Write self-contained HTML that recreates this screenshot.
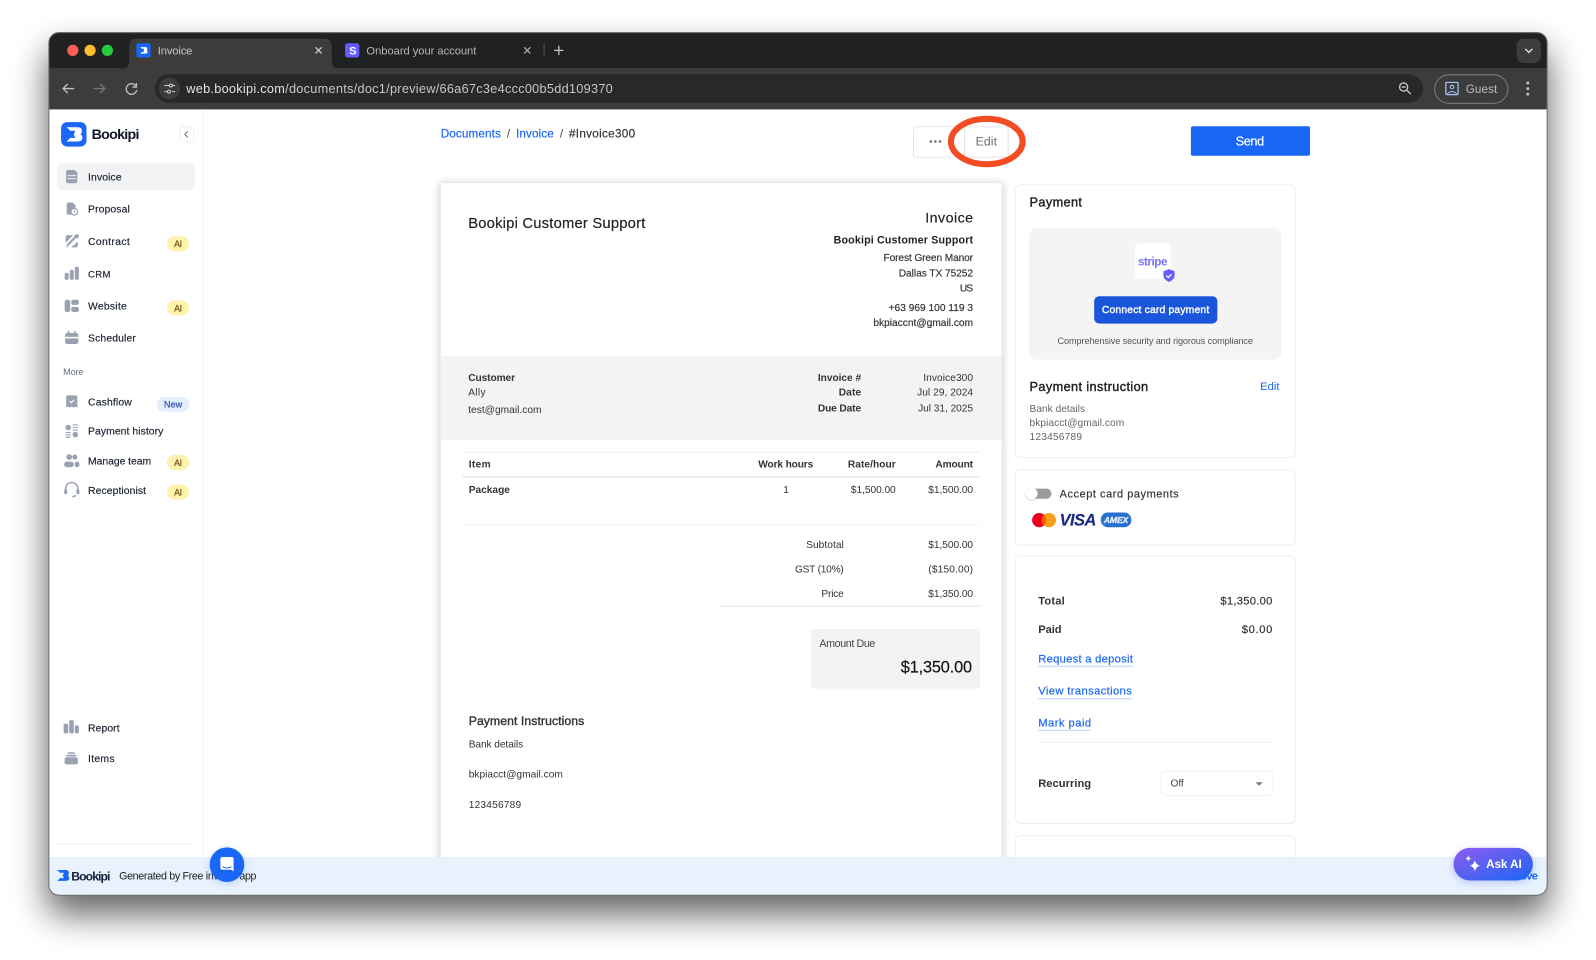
<!DOCTYPE html>
<html lang="en">
<head>
<meta charset="utf-8">
<title>Invoice</title>
<style>
html,body{margin:0;padding:0;background:#fff;width:1596px;height:960px;overflow:hidden}
svg{display:block;width:1596px;height:960px;filter:blur(.3px)}
text{font-family:"Liberation Sans",sans-serif;white-space:pre}
.m{stroke-width:.18;paint-order:stroke}
.h{stroke-width:.38;paint-order:stroke}
.b{font-weight:700}
</style>
</head>
<body>
<svg xmlns="http://www.w3.org/2000/svg" viewBox="0 0 1568 943.16">
<defs>
<filter id="sh" filterUnits="userSpaceOnUse" x="0" y="0" width="1568" height="943"><feGaussianBlur stdDeviation="17"/></filter>
<filter id="sh2" filterUnits="userSpaceOnUse" x="380" y="140" width="660" height="760"><feGaussianBlur stdDeviation="4"/></filter>
<filter id="sh3" filterUnits="userSpaceOnUse" x="190" y="815" width="1350" height="70"><feGaussianBlur stdDeviation="4"/></filter>
<clipPath id="w"><rect x="48" y="32" width="1472" height="847.500" rx="10"/></clipPath>
<clipPath id="main"><rect x="200" y="108" width="1320" height="734"/></clipPath>
<linearGradient id="ai" x1="0" y1="0" x2="1" y2="1"><stop offset="0" stop-color="#8f5cf0"/><stop offset="1" stop-color="#1a66f5"/></linearGradient>
<path id="bk" d="M5 5H16Q20 5 20 9Q20 11 18.500 12Q20.500 13 20.500 15.500Q20.500 19 16 19H5L8.500 15.500H13.500L12 12L13.500 8.500H8.500Z"/>
</defs>

<!-- window shadow -->
<rect x="46" y="49" width="1476" height="850" rx="14" fill="#000" opacity=".6" filter="url(#sh)"/>

<g clip-path="url(#w)">
<!-- chrome -->
<rect x="48" y="32" width="1472" height="36" fill="#202221"/>
<rect x="48" y="67" width="1472" height="41" fill="#3c3c3c"/>
<path d="M119 68Q127 68 127 60V46Q127 38 135 38H318Q326 38 326 46V60Q326 68 334 68Z" fill="#3c3c3c"/>
<circle cx="71.500" cy="49.500" r="5.500" fill="#ff5f57"/>
<circle cx="88.500" cy="49.500" r="5.500" fill="#febc2e"/>
<circle cx="105.500" cy="49.500" r="5.500" fill="#28c840"/>
<rect x="134" y="42.500" width="14" height="14" rx="2" fill="#1a66f5"/>
<use href="#bk" transform="translate(135.500 44) scale(.46)" fill="#fff"/>
<text x="155" y="53.500" font-size="11" fill="#c9c9c9" textLength="34">Invoice</text>
<path d="M310 46.500l6 6M316 46.500l-6 6" stroke="#d0d0d0" stroke-width="1.200"/>
<rect x="339" y="42.500" width="14" height="14" rx="2.500" fill="#635bff"/>
<text x="343" y="53.500" font-size="11" class="b" fill="#fff">S</text>
<text x="360" y="53.500" font-size="11" fill="#b6b6b6" textLength="108">Onboard your account</text>
<path d="M515 46.500l6 6M521 46.500l-6 6" stroke="#b0b0b0" stroke-width="1.200"/>
<rect x="534" y="43" width="1" height="13" fill="#555"/>
<path d="M549 45v9M544.500 49.500h9" stroke="#c8c8c8" stroke-width="1.300"/>
<rect x="1490" y="38" width="24" height="24" rx="7" fill="#3c3c3c"/>
<path d="M1498.500 48l3.500 3.500 3.500-3.500" fill="none" stroke="#ddd" stroke-width="1.400"/>

<path d="M73 87H62M66.500 82.500L62 87l4.500 4.500" fill="none" stroke="#c0c0c0" stroke-width="1.300"/>
<path d="M92 87H103M98.500 82.500L103 87l-4.500 4.500" fill="none" stroke="#777" stroke-width="1.300"/>
<path d="M133.500 84.500A5.200 5.200 0 1 0 134.300 88.500M134 81.500v4h-4" fill="none" stroke="#c0c0c0" stroke-width="1.300"/>
<rect x="152" y="73" width="1246" height="28" rx="14" fill="#282828"/>
<circle cx="166.500" cy="87" r="10.500" fill="#3c3c3c"/>
<path d="M161.500 84h5M169.500 84h2.500M161.500 90h2.500M169 90h3" stroke="#d0d0d0" stroke-width="1"/>
<circle cx="168" cy="84" r="1.500" fill="none" stroke="#d0d0d0"/><circle cx="166" cy="90" r="1.500" fill="none" stroke="#d0d0d0"/>
<text x="183" y="91.500" font-size="12.500" fill="#dedede" textLength="419"><tspan fill="#e4e4e4">web.bookipi.com</tspan><tspan fill="#c8c8c8">/documents/doc1/preview/66a67c3e4ccc00b5dd109370</tspan></text>
<circle cx="1379" cy="85.500" r="4" fill="none" stroke="#c8c8c8" stroke-width="1.300"/>
<path d="M1377 85.500h4M1382 88.500l4 4" stroke="#c8c8c8" stroke-width="1.300"/>
<rect x="1409.500" y="73.500" width="72" height="28" rx="14" fill="none" stroke="#7c7c7c"/>
<rect x="1420.500" y="81" width="12" height="12" rx="1" fill="none" stroke="#a8c7fa" stroke-width="1.200"/>
<circle cx="1426.500" cy="85.500" r="1.800" fill="none" stroke="#a8c7fa"/>
<path d="M1422 92q4.500-4 9 0" fill="none" stroke="#a8c7fa"/>
<text x="1440" y="91.500" font-size="11.500" fill="#bcbcbc" textLength="31">Guest</text>
<circle cx="1501" cy="81.500" r="1.400" fill="#c8c8c8"/><circle cx="1501" cy="87" r="1.400" fill="#c8c8c8"/><circle cx="1501" cy="92.500" r="1.400" fill="#c8c8c8"/>

<!-- page -->
<rect x="48" y="107.500" width="1472" height="773" fill="#fff"/>
<rect x="199" y="108" width="1" height="734" fill="#f1f2f4"/>

<!-- sidebar -->
<rect x="60" y="120" width="25" height="24" rx="6" fill="#1a66f5"/>
<use href="#bk" transform="translate(60.500 120)" fill="#fff"/>
<text x="90" y="136.500" font-size="14" class="b" fill="#101828" textLength="47">Bookipi</text>
<rect x="176.500" y="124.500" width="14" height="15" rx="4" fill="#fff" stroke="#eceef1"/>
<path d="M184.500 129l-3 3 3 3" fill="none" stroke="#667085" stroke-width="1"/>
<rect x="56" y="160" width="135.500" height="27" rx="6" fill="#f2f3f5"/>

<g font-size="10.200" fill="#1d2433" stroke="#1d2433">
<text class="m" x="86.500" y="177.500" textLength="33">Invoice</text>
<text class="m" x="86.500" y="208.700" textLength="41">Proposal</text>
<text class="m" x="86.500" y="240.500" textLength="41">Contract</text>
<text class="m" x="86.500" y="272.500" font-size="9.400" textLength="22">CRM</text>
<text class="m" x="86.500" y="304" textLength="38">Website</text>
<text class="m" x="86.500" y="335.500" textLength="47">Scheduler</text>
<text class="m" x="86.500" y="398.500" textLength="43">Cashflow</text>
<text class="m" x="86.500" y="427" textLength="74">Payment history</text>
<text class="m" x="86.500" y="456.500" textLength="62">Manage team</text>
<text class="m" x="86.500" y="485.500" textLength="57">Receptionist</text>
<text class="m" x="86.500" y="718.500" textLength="31">Report</text>
<text class="m" x="86.500" y="748.500" textLength="26">Items</text>
</g>
<text x="62" y="368.500" font-size="9" fill="#667085" textLength="20">More</text>

<g fill="#fdf3b0">
<rect x="164" y="232" width="22" height="15" rx="7.500"/>
<rect x="164" y="295" width="22" height="15" rx="7.500"/>
<rect x="164" y="447" width="22" height="15" rx="7.500"/>
<rect x="164" y="476" width="22" height="15" rx="7.500"/>
</g>
<g font-size="9" fill="#7a4f10" stroke="#7a4f10">
<text class="m" x="171" y="242.800" textLength="8">AI</text>
<text class="m" x="171" y="305.800" textLength="8">AI</text>
<text class="m" x="171" y="457.800" textLength="8">AI</text>
<text class="m" x="171" y="486.800" textLength="8">AI</text>
</g>
<rect x="154" y="390" width="32" height="14.500" rx="7.200" fill="#e3effc"/>
<text class="m" x="161" y="400.500" font-size="9" fill="#2952b3" stroke="#2952b3" textLength="18">New</text>

<!-- sidebar icons -->
<g fill="#9aa2b1">
<g transform="translate(70.500 173.500)"><path d="M-5.500-4.500q0-2 2-2H3l2.500 2.500V4.500q0 2-2 2h-7q-2 0-2-2Z"/><path d="M-4-1H4M-4 2H4" stroke="#f2f3f5" stroke-width="1"/></g>
<g transform="translate(70.500 205)"><path d="M-5-3.500q0-2.500 2-2.500h4l3 3v2h-1a4.500 4.500 0 0 0-3 7h-3q-2 0-2-2Z"/><circle cx="2.500" cy="3" r="3.300" fill="none" stroke="#9aa2b1" stroke-width="1.200"/><path d="M2.500 1.500V3l1 1" fill="none" stroke="#9aa2b1" stroke-width=".8"/></g>
<g transform="translate(70.500 237)"><path d="M-6-4q0-2 2-2H1.500L-6 1.500ZM6 .5V4q0 2-2 2H-.5ZM-6 5-3 5.800-5.500 6ZM-5 6 3-2l3-3-1.500-1.500L-4 2-6 6Z"/><path d="M3.500-6.500l2-.5 1.500 1.500-.5 2-1 1L2.500-5Z"/></g>
<g transform="translate(70.500 269)"><rect x="-7" y="-1" width="4" height="7" rx="2"/><rect x="-2" y="-4" width="4" height="10" rx="2"/><rect x="3" y="-7" width="4" height="13" rx="2"/></g>
<g transform="translate(70.500 300.500)"><rect x="-7" y="-6" width="5.500" height="12" rx="2.200"/><rect x="-.5" y="-6" width="7.500" height="5" rx="2"/><rect x="-.5" y="1" width="7.500" height="5" rx="2"/></g>
<g transform="translate(70.500 332)"><path d="M-6.500-2.500q0-2.500 2.500-2.500H4q2.500 0 2.500 2.500V-1h-13ZM-6.500.5h13V3.500q0 2.500-2.500 2.500H-4q-2.500 0-2.500-2.500Z"/><rect x="-4" y="-7" width="1.500" height="3" rx=".7"/><rect x="2.500" y="-7" width="1.500" height="3" rx=".7"/></g>
<g transform="translate(70.500 394.500)"><path d="M-5.500-4.500q0-1.500 1.500-1.500H4q1.500 0 1.500 1.500V6l-2-1-1.500 1-2-1-2 1-1.500-1-2 1Z"/><path d="M-2.200-.5l1.700 1.700 3-3" fill="none" stroke="#fff" stroke-width="1.100"/></g>
<g transform="translate(70.500 423.500)"><circle cx="-3.500" cy="-3.500" r="2.700"/><circle cx="3.500" cy="3.500" r="2.700"/><path d="M1-6h5M1-3.500h5M1-1h5M-6 1.500h5M-6 3.800h5M-6 6h5" stroke="#9aa2b1" stroke-width="1.100"/></g>
<g transform="translate(70.500 452.500)"><circle cx="-2.500" cy="-3.500" r="2.800"/><circle cx="3" cy="-3.500" r="2.500"/><rect x="-7.500" y="1" width="9.500" height="5.500" rx="2.700"/><rect x="3" y="1" width="4.500" height="5.500" rx="2.200"/></g>
<g transform="translate(70.500 481)"><path d="M-6 1v-2a6 6 0 0 1 12 0v2M4 5.500Q3 7 .5 7" fill="none" stroke="#9aa2b1" stroke-width="1.500"/><rect x="-7.500" y="-.5" width="3" height="5" rx="1.300"/><rect x="4.500" y="-.5" width="3" height="5" rx="1.300"/></g>
<g transform="translate(70 714.500)"><rect x="-7.500" y="-3.500" width="4.500" height="9.500" rx="1.500"/><rect x="-2" y="-7" width="4.500" height="13" rx="1.500"/><rect x="3.500" y="-2" width="4" height="8" rx="1.500"/></g>
<g transform="translate(70 745)"><rect x="-6.500" y="-1" width="13" height="7" rx="2"/><rect x="-5" y="-3.500" width="10" height="1.700" rx=".8"/><rect x="-3.500" y="-6" width="7" height="1.700" rx=".8"/></g>
</g>
<rect x="56" y="829" width="135" height="1" fill="#eeeff1"/>

<!-- main content -->
<g clip-path="url(#main)">
<g font-size="11.500" fill="#1a66f5" stroke="#1a66f5">
<text class="m" x="433" y="135" textLength="59">Documents</text>
<text class="m" x="507" y="135" textLength="37">Invoice</text>
</g>
<text x="498" y="135" font-size="11.500" fill="#444">/</text>
<text x="550" y="135" font-size="11.500" fill="#444">/</text>
<text class="m" x="559" y="135" font-size="11.500" fill="#333" stroke="#333" textLength="65">#Invoice300</text>

<rect x="897.500" y="124.500" width="93" height="30" rx="2.500" fill="#fff" stroke="#e5e5e5"/>
<rect x="947" y="124.500" width="1" height="30" fill="#e5e5e5"/>
<circle cx="914.500" cy="139" r="1.300" fill="#777"/><circle cx="919" cy="139" r="1.300" fill="#777"/><circle cx="923.500" cy="139" r="1.300" fill="#777"/>
<text x="958.500" y="143" font-size="12" fill="#6a6a6a" textLength="21">Edit</text>
<ellipse cx="969.500" cy="139" rx="35.200" ry="22.300" fill="none" stroke="#f34b22" stroke-width="6"/>
<rect x="1170" y="124" width="117" height="29" rx="2" fill="#1a66f5"/>
<text class="m" x="1214" y="143" font-size="12.500" fill="#fff" stroke="#fff" textLength="28">Send</text>

<!-- invoice -->
<rect x="431" y="179" width="555" height="760" fill="#000" opacity=".16" filter="url(#sh2)"/>
<rect x="433" y="180" width="551" height="760" fill="#fff"/>
<text class="m" x="460" y="224" font-size="14.500" fill="#222" stroke="#222" textLength="174">Bookipi Customer Support</text>
<text class="m" x="909" y="218.800" font-size="14" fill="#222" stroke="#222" textLength="47">Invoice</text>
<text x="819" y="239" font-size="10.500" class="b" fill="#222" textLength="137">Bookipi Customer Support</text>
<g font-size="10" fill="#333" stroke="#333">
<text class="m" x="868" y="256.500" textLength="88">Forest Green Manor</text>
<text class="m" x="883" y="271.500" textLength="73">Dallas TX 75252</text>
<text class="m" x="943" y="286.500" textLength="13">US</text>
<text class="m" x="873" y="305.500" textLength="83">+63 969 100 119 3</text>
<text class="m" x="858" y="320.500" textLength="98">bkpiaccnt@gmail.com</text>
</g>
<rect x="433" y="350" width="551" height="82.500" fill="#f2f3f5"/>
<g font-size="10" fill="#333">
<text x="460" y="374.500" class="b" textLength="46">Customer</text>
<text x="460" y="388.800" textLength="17">Ally</text>
<text x="460" y="405.800" textLength="72">test@gmail.com</text>
<text x="803.500" y="374.500" class="b" textLength="42.500">Invoice #</text>
<text x="824" y="388.800" class="b" textLength="22">Date</text>
<text x="803.500" y="404.500" class="b" textLength="42.500">Due Date</text>
<text x="907" y="374.500" textLength="49">Invoice300</text>
<text x="901" y="388.800" textLength="55">Jul 29, 2024</text>
<text x="902" y="404.500" textLength="54">Jul 31, 2025</text>
</g>
<rect x="454" y="444" width="509" height="1" fill="#f1f1f1"/>
<rect x="454" y="468" width="509" height="1" fill="#e2e2e2"/>
<rect x="454" y="515" width="509" height="1" fill="#f1f1f1"/>
<rect x="708" y="595" width="255" height="1" fill="#e2e2e2"/>
<g font-size="10" fill="#333">
<text x="460.500" y="459.500" class="b" textLength="21.500">Item</text>
<text x="745" y="459.500" class="b" textLength="54">Work hours</text>
<text x="833" y="459.500" class="b" textLength="47">Rate/hour</text>
<text x="919" y="459.500" class="b" textLength="37">Amount</text>
<text x="460.500" y="484.500" class="b" textLength="40.500">Package</text>
<text x="769.500" y="484.500">1</text>
<text x="836" y="484.500" textLength="44">$1,500.00</text>
<text x="912" y="484.500" textLength="44">$1,500.00</text>
<text x="792" y="538.500" textLength="37">Subtotal</text>
<text x="912" y="538.500" textLength="44">$1,500.00</text>
<text x="781" y="562.500" textLength="48">GST (10%)</text>
<text x="912" y="562.500" textLength="44">($150.00)</text>
<text x="807" y="586.500" textLength="22">Price</text>
<text x="912" y="586.500" textLength="44">$1,350.00</text>
</g>
<rect x="797" y="618" width="166" height="58.500" rx="2" fill="#f2f3f5"/>
<text x="805" y="635.700" font-size="10.500" fill="#444" textLength="55">Amount Due</text>
<text class="m" x="885" y="660.500" font-size="16" fill="#111" stroke="#111" textLength="70">$1,350.00</text>
<text class="h" x="460.500" y="712.300" font-size="12" fill="#333" stroke="#333" textLength="113.500">Payment Instructions</text>
<g font-size="10" fill="#333">
<text x="460.500" y="734.500" textLength="53.500">Bank details</text>
<text x="460.500" y="763.800" textLength="92.500">bkpiacct@gmail.com</text>
<text x="460.500" y="793.800" textLength="51.500">123456789</text>
</g>

<!-- right cards -->
<g fill="#fff" stroke="#eeeff1">
<rect x="997.500" y="181.500" width="275" height="268" rx="5"/>
<rect x="997.500" y="461.500" width="275" height="74" rx="5"/>
<rect x="997.500" y="546" width="275" height="263" rx="5"/>
<rect x="997.500" y="821" width="275" height="100" rx="5"/>
</g>
<text class="h" x="1011.500" y="203" font-size="12.500" fill="#222" stroke="#222" textLength="51.500">Payment</text>
<rect x="1011" y="224" width="248" height="129.500" rx="8" fill="#f4f4f5"/>
<rect x="1115" y="239" width="35" height="35" rx="4" fill="#fff"/>
<text x="1118" y="261" font-size="11.500" font-weight="700" fill="#7a73ff" textLength="29">stripe</text>
<path d="M1148.500 264.500l5.500 2v4q0 4-5.500 6.500-5.500-2.500-5.500-6.500v-4Z" fill="#635bff"/>
<path d="M1145.800 270.700l2 2 3.200-3.300" fill="none" stroke="#fff" stroke-width="1.200"/>
<rect x="1075" y="291" width="121" height="27" rx="5" fill="#1a56db"/>
<text class="h" x="1082.500" y="307.700" font-size="10.200" fill="#fff" stroke="#fff" textLength="105.500">Connect card payment</text>
<text x="1039" y="338" font-size="9" fill="#555" textLength="192">Comprehensive security and rigorous compliance</text>
<text class="h" x="1011.500" y="384.300" font-size="12.500" fill="#222" stroke="#222" textLength="116.500">Payment instruction</text>
<text x="1238" y="383" font-size="11" fill="#1a66f5" textLength="19">Edit</text>
<g font-size="10" fill="#666">
<text x="1011.500" y="404.800" textLength="54.500">Bank details</text>
<text x="1011.500" y="418.500" textLength="93">bkpiacct@gmail.com</text>
<text x="1011.500" y="432.500" textLength="51.500">123456789</text>
</g>
<rect x="1012" y="480" width="21" height="10" rx="5" fill="#9c9c9c"/>
<circle cx="1013.500" cy="485.500" r="6.600" fill="#000" opacity=".14"/>
<circle cx="1013.500" cy="485" r="6" fill="#fff"/>
<text class="m" x="1041" y="489" font-size="10.800" fill="#333" stroke="#333" textLength="117">Accept card payments</text>
<circle cx="1021" cy="511" r="7" fill="#eb001b"/>
<circle cx="1030.500" cy="511" r="7" fill="#f79e1b"/>
<path d="M1025.700 505.900a7 7 0 0 1 0 10.200a7 7 0 0 1 0-10.200Z" fill="#ff5f00"/>
<text class="m" x="1041" y="516.500" font-size="16" font-style="italic" font-weight="700" fill="#1a2a80" stroke="#1a2a80" textLength="36">VISA</text>
<rect x="1081.500" y="503.500" width="30" height="14.500" rx="7" fill="#2670d0"/>
<text x="1084.500" y="514" font-size="8.500" font-style="italic" class="b" fill="#cfe0f7" stroke="#fff" stroke-width=".3" textLength="24">AMEX</text>

<g font-size="11" fill="#333">
<text x="1020" y="594" class="b" textLength="26">Total</text>
<text class="m" x="1199" y="594" stroke="#333" textLength="51">$1,350.00</text>
<text x="1020" y="622" class="b" textLength="23">Paid</text>
<text class="m" x="1220" y="622" stroke="#333" textLength="30">$0.00</text>
<text x="1020" y="773" class="b" textLength="52">Recurring</text>
</g>
<g font-size="11" fill="#1a66f5" stroke="#1a66f5">
<text class="m" x="1020" y="651" textLength="93">Request a deposit</text>
<text class="m" x="1020" y="682.500" textLength="92">View transactions</text>
<text class="m" x="1020" y="714" textLength="52">Mark paid</text>
</g>
<rect x="1020" y="654" width="93" height="1" fill="#bcd3fb"/>
<rect x="1020" y="686" width="92" height="1" fill="#bcd3fb"/>
<rect x="1020" y="717" width="52" height="1" fill="#bcd3fb"/>
<rect x="1019" y="729" width="232" height="1" fill="#f0f1f7"/>
<rect x="1140.500" y="757.500" width="110" height="24" rx="3.500" fill="#fff" stroke="#f3f3f3"/>
<text x="1150" y="772.500" font-size="10" fill="#444" textLength="13">Off</text>
<path d="M1233.500 768.500h7l-3.500 3.500Z" fill="#777"/>
</g>

<!-- footer bar -->
<rect x="48" y="842" width="1472" height="38" fill="#e8f2fd"/>
<use href="#bk" transform="translate(52.500 851) scale(.76)" fill="#1a66f5"/>
<text x="70" y="865" font-size="12" class="b" fill="#14213d" textLength="38.500">Bookipi</text>
<text x="117" y="864" font-size="10.500" fill="#222" textLength="135">Generated by Free invoice app</text>
<text x="1472" y="864" font-size="11" class="b" fill="#1a66f5" textLength="39">Remove</text>

<!-- chat -->
<circle cx="223" cy="851" r="17" fill="#1a66f5" opacity=".25" filter="url(#sh3)"/>
<circle cx="223" cy="849.500" r="17" fill="#1a66f5"/>
<path d="M216.500 844q0-2 2-2h9q2 0 2 2v12l-2.500-1.500h-8.500q-2 0-2-2Z" fill="#fff"/>
<path d="M218.500 851.500q4.500 2.500 9 0" fill="none" stroke="#1a66f5" stroke-width=".9"/>

<!-- ask ai -->
<rect x="1428" y="835" width="78" height="32" rx="16" fill="#4a5cf5" opacity=".3" filter="url(#sh3)"/>
<rect x="1428" y="833" width="78" height="32" rx="16" fill="url(#ai)"/>
<path d="M1449 845q1 4.500 5 5.500-4 1-5 5.500-1-4.500-5-5.500 4-1 5-5.500Z" fill="#fff"/>
<path d="M1442.500 840.500q.5 2.500 3 3-2.500.5-3 3-.5-2.500-3-3 2.500-.5 3-3Z" fill="#fff"/>
<text x="1460" y="853" font-size="11.500" class="b" fill="#fff" textLength="35">Ask AI</text>
</g>

<rect x="48" y="32" width="1472" height="847.500" rx="10" fill="none" stroke="#6c6c6c" stroke-width="1"/>
</svg>
</body>
</html>
